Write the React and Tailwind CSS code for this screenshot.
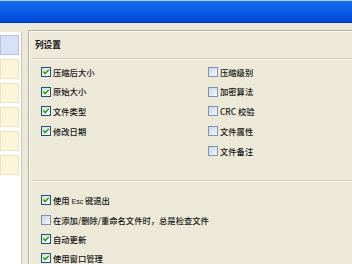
import React from "react";

const font = { fontFamily: '"Noto Sans CJK SC", "Liberation Sans", sans-serif' };

function Box({ checked }) {
  return (
    <span
      className={
        "relative shrink-0 w-[10px] h-[10px] border " +
        (checked
          ? "border-[#1c5180] bg-gradient-to-br from-[#dcdcd6] to-[#ffffff]"
          : "border-[#7c95b4] bg-gradient-to-br from-[#c9d6e8] to-[#f4f7fb]")
      }
    >
      {checked && (
        <svg viewBox="0 0 8 8" className="absolute left-0 top-0 w-[8px] h-[8px]">
          <path d="M1.3 3.6 L3.2 5.6 L6.8 1.8" fill="none" stroke="#21a121" strokeWidth="1.5" />
        </svg>
      )}
    </span>
  );
}

function Row({ checked, children, h = "h-[19.75px]" }) {
  return (
    <div className={"flex items-center gap-[2px] " + h}>
      <Box checked={checked} />
      <span className="text-[8.3px] font-medium leading-none text-[#141414] whitespace-nowrap">{children}</span>
    </div>
  );
}

function Sep() {
  return <div className="ml-[3px] h-[2px] border-t border-[#cdc9b7] border-b border-b-[#fbfaf4]" />;
}

export default function App() {
  const items = [true, false, false, false, false, false];
  return (
    <div className="w-[352px] h-[264px] overflow-hidden bg-[#ece9d8] flex flex-col" style={font}>
      <div className="h-[22px] shrink-0 border-t border-[#a9cdf7] bg-gradient-to-b from-[#1a6cf0] via-[#0a5ae6] to-[#0048d6]" />
      <div className="h-[1px] shrink-0 bg-[#0034a8]" />
      <div className="h-[2px] shrink-0 bg-[#e4e8f0]" />
      <div className="flex flex-1 pt-[5px]">
        <div className="w-[22px] shrink-0 mt-[2px] bg-white border-r border-[#c9c6b6] flex flex-col gap-[4px] pt-[3px]">
          {items.map((sel, i) => (
            <div
              key={i}
              className={
                "w-[19px] h-[20px] border " +
                (sel ? "bg-[#d7e2f7] border-[#b4c4e2]" : "bg-[#fdf5d9] border-[#efe4bf]")
              }
            />
          ))}
        </div>
        <div className="ml-[6px] flex-1 border-t border-l border-[#b2af9f] shadow-[inset_1px_1px_0_#fdfcf6] flex flex-col">
          <div className="h-[27px] flex items-center pl-[6px]">
            <span className="text-[8.6px] font-bold leading-none text-[#111]">列设置</span>
          </div>
          <Sep />
          <div className="pt-[2px] pl-[12px] flex">
            <div className="w-[167px] flex flex-col">
              <Row checked>压缩后大小</Row>
              <Row checked>原始大小</Row>
              <Row checked>文件类型</Row>
              <Row checked>修改日期</Row>
            </div>
            <div className="flex flex-col">
              <Row>压缩级别</Row>
              <Row>加密算法</Row>
              <Row>CRC 校验</Row>
              <Row>文件属性</Row>
              <Row>文件备注</Row>
            </div>
          </div>
          <div className="h-[19px]" />
          <Sep />
          <div className="pt-[9px] pl-[12px] flex flex-col">
            <Row checked h="h-[19.3px]">
              使用 <span className="text-[7px] font-normal" style={{ fontFamily: '"Liberation Sans", sans-serif' }}>Esc</span> 键退出
            </Row>
            <Row h="h-[19.3px]">在添加/删除/重命名文件时，总是检查文件</Row>
            <Row checked h="h-[19.3px]">自动更新</Row>
            <Row checked h="h-[19.3px]">使用窗口管理</Row>
          </div>
        </div>
      </div>
    </div>
  );
}
